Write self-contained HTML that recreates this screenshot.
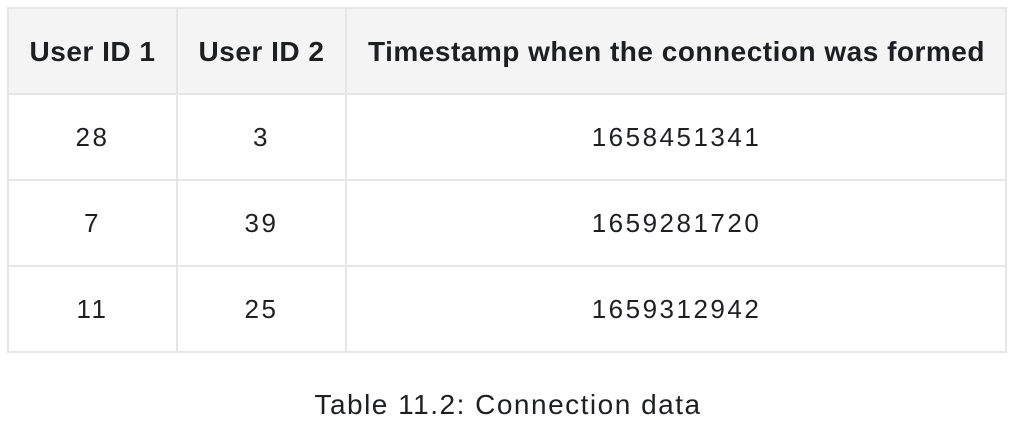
<!DOCTYPE html>
<html><head><style>
html,body{margin:0;padding:0;background:#fff;width:1016px;height:428px;overflow:hidden}
body{font-family:"Liberation Sans",sans-serif;color:#1d1f23;position:relative}
.c{position:absolute;display:flex;align-items:center;justify-content:center;box-sizing:border-box;white-space:nowrap}
.h{background:#f4f4f4;font-weight:bold;font-size:28px;letter-spacing:0.5px}
.d{font-size:26px;letter-spacing:2.5px}
.l{position:absolute;background:#e6e6e6}
</style></head><body>
<div class="c h" style="left:9px;top:9px;width:997px;height:85px"></div>
<div class="c h" style="left:9px;top:9px;width:167px;height:85px">User ID 1</div>
<div class="c h" style="left:178px;top:9px;width:167px;height:85px">User ID 2</div>
<div class="c h" style="left:347px;top:9px;width:659px;height:85px">Timestamp when the connection was formed</div>

<div class="c d" style="left:9px;top:95px;width:167px;height:84px">28</div>
<div class="c d" style="left:178px;top:95px;width:167px;height:84px">3</div>
<div class="c d" style="left:347px;top:95px;width:659px;height:84px">1658451341</div>
<div class="c d" style="left:9px;top:181px;width:167px;height:84px">7</div>
<div class="c d" style="left:178px;top:181px;width:167px;height:84px">39</div>
<div class="c d" style="left:347px;top:181px;width:659px;height:84px">1659281720</div>
<div class="c d" style="left:9px;top:267px;width:167px;height:84px">11</div>
<div class="c d" style="left:178px;top:267px;width:167px;height:84px">25</div>
<div class="c d" style="left:347px;top:267px;width:659px;height:84px">1659312942</div>

<div class="l" style="left:7px;top:7px;width:1000px;height:2px"></div>
<div class="l" style="left:7px;top:93px;width:1000px;height:2px"></div>
<div class="l" style="left:7px;top:179px;width:1000px;height:2px"></div>
<div class="l" style="left:7px;top:265px;width:1000px;height:2px"></div>
<div class="l" style="left:7px;top:351px;width:1000px;height:2px"></div>
<div class="l" style="left:7px;top:7px;width:2px;height:346px"></div>
<div class="l" style="left:176px;top:7px;width:2px;height:346px"></div>
<div class="l" style="left:345px;top:7px;width:2px;height:346px"></div>
<div class="l" style="left:1005px;top:7px;width:2px;height:346px"></div>

<div class="c" style="left:0;top:386px;width:1016px;height:38px;font-size:28px;letter-spacing:1.5px">Table 11.2: Connection data</div>
</body></html>
